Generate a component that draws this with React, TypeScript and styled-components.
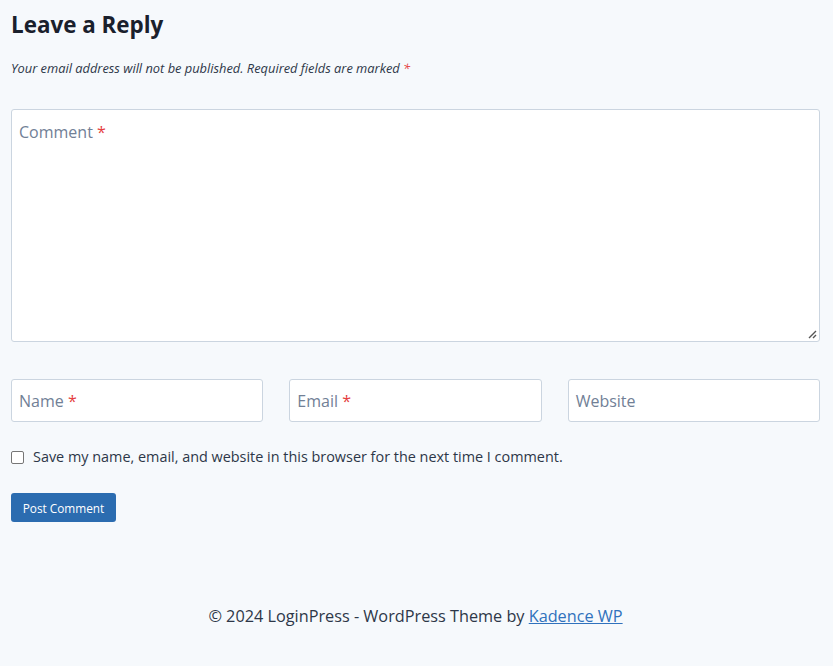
import React from "react";
import styled, { createGlobalStyle } from "styled-components";

const Global = createGlobalStyle`
  html, body { margin: 0; padding: 0; background: #f6f9fc; }
  body { font-family: "Open Sans", "Noto Sans", sans-serif; color: #2d3748; }
  * { box-sizing: border-box; }
`;

const Page = styled.div`
  padding: 7px 13px 40px 11px;
  display: flex;
  flex-direction: column;
`;

const Title = styled.h3`
  margin: 0;
  font-size: 22.4px;
  line-height: 36px;
  font-weight: 700;
  color: #1a202c;
`;

const Notes = styled.p`
  margin: 13px 0 0;
  font-size: 12.85px;
  line-height: 24px;
  font-style: italic;
  color: #2d3748;
`;

const Req = styled.span`
  color: #e53e3e;
`;

const FieldBox = styled.div<{ $h: number }>`
  position: relative;
  height: ${(p) => p.$h}px;
  background: #fff;
  border: 1px solid #cbd5e0;
  border-radius: 3px;
  padding: ${(p) => (p.$h > 100 ? "10px 7px" : "0 7px")};
  display: flex;
  align-items: ${(p) => (p.$h > 100 ? "flex-start" : "center")};
  font-size: 16px;
  line-height: 24px;
  color: #718096;
`;

const CommentWrap = styled.div`
  margin-top: 29px;
`;

const Grip = styled.svg`
  position: absolute;
  right: 1px;
  bottom: 1px;
`;

const FieldsRow = styled.div`
  margin-top: 37px;
  display: grid;
  grid-template-columns: 1fr 1fr 1fr;
  gap: 26px;
`;

const CheckRow = styled.label`
  margin-top: 23px;
  display: flex;
  align-items: center;
  gap: 9px;
  font-size: 14.42px;
  line-height: 24px;
  color: #2d3748;
`;

const Box = styled.span`
  width: 13px;
  height: 13px;
  border: 1px solid #767676;
  border-radius: 2px;
  background: #fff;
  flex: none;
`;

const Button = styled.button`
  margin-top: 24px;
  align-self: flex-start;
  height: 29px;
  width: 105px;
  padding: 0;
  border: none;
  border-radius: 3px;
  background: #2b6cb0;
  color: #fff;
  font-family: inherit;
  font-size: 11.8px;
  font-weight: 500;
`;

const Footer = styled.footer`
  margin-top: 82px;
  text-align: center;
  font-size: 16.25px;
  line-height: 24px;
  color: #2d3748;
`;

const Link = styled.a`
  color: #3072bd;
  text-decoration: underline;
`;

export default function App() {
  return (
    <>
      <Global />
      <Page>
        <Title>Leave a Reply</Title>
        <Notes>
          Your email address will not be published. Required fields are marked <Req>*</Req>
        </Notes>
        <CommentWrap>
          <FieldBox $h={233}>
            <span>
              Comment <Req>*</Req>
            </span>
            <Grip width="12" height="12" viewBox="0 0 12 12">
              <path d="M10 3 L3 10 M10 7 L7 10" stroke="#555" strokeWidth="1.4" />
            </Grip>
          </FieldBox>
        </CommentWrap>
        <FieldsRow>
          <FieldBox $h={43}>
            <span>
              Name <Req>*</Req>
            </span>
          </FieldBox>
          <FieldBox $h={43}>
            <span>
              Email <Req>*</Req>
            </span>
          </FieldBox>
          <FieldBox $h={43}>
            <span>Website</span>
          </FieldBox>
        </FieldsRow>
        <CheckRow>
          <Box />
          Save my name, email, and website in this browser for the next time I comment.
        </CheckRow>
        <Button>Post Comment</Button>
        <Footer>
          © 2024 LoginPress - WordPress Theme by <Link href="#">Kadence WP</Link>
        </Footer>
      </Page>
    </>
  );
}
